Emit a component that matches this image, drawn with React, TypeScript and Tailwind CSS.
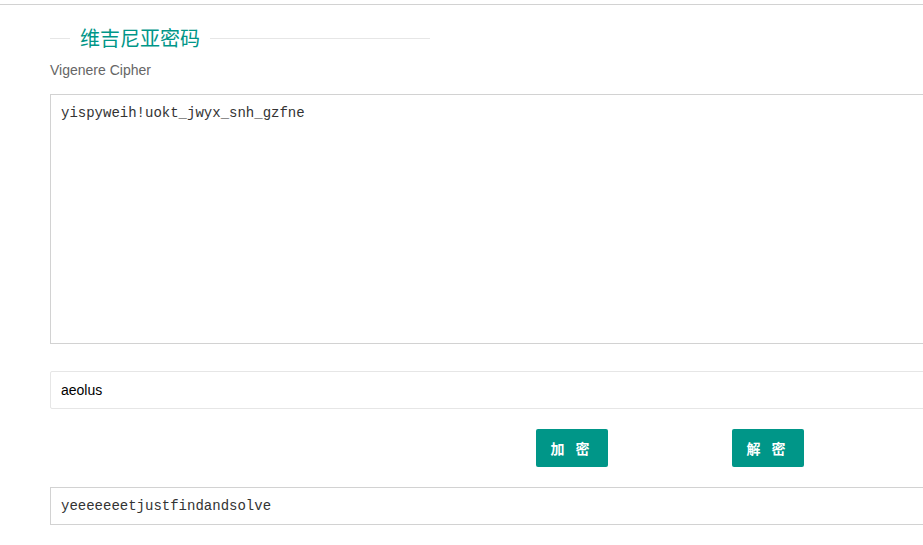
export default function App() {
  return (
    <div className="h-[545px] w-[923px] overflow-hidden bg-white font-['Liberation_Sans','Noto_Sans_CJK_SC',sans-serif]">
      <div className="h-[4px]" />
      <div className="border-t border-[#d2d2d2] pl-[50px]">
        <div className="mt-[18px] flex w-[380px] items-center">
          <div className="h-px w-[20px] bg-[#e6e6e6]" />
          <span className="px-[10px] font-['Noto_Sans_CJK_SC',sans-serif] text-[20px] leading-[30px] text-[#009688]">
            维吉尼亚密码
          </span>
          <div className="h-px flex-1 bg-[#e6e6e6]" />
        </div>
        <p className="mt-[7px] text-[14px] leading-[20px] text-[#666]">Vigenere Cipher</p>
        <textarea
          readOnly
          value="yispyweih!uokt_jwyx_snh_gzfne"
          className="mt-[14px] block h-[250px] w-[1000px] resize-none border border-[#d2d2d2] px-[10px] py-[8px] font-['Liberation_Mono',monospace] text-[14px] leading-[20px] text-[#333] outline-none"
        />
        <input
          readOnly
          value="aeolus"
          className="mt-[27px] block h-[38px] w-[1000px] rounded-[2px] border border-[#e6e6e6] px-[10px] text-[14px] text-black outline-none"
        />
        <div className="mt-[20px] flex gap-[124px] pl-[486px]">
          <button className="h-[38px] w-[72px] rounded-[2px] bg-[#009688] font-['Noto_Sans_CJK_SC',sans-serif] text-[14px] font-bold tracking-[4px] text-white">
            加 密
          </button>
          <button className="h-[38px] w-[72px] rounded-[2px] bg-[#009688] font-['Noto_Sans_CJK_SC',sans-serif] text-[14px] font-bold tracking-[4px] text-white">
            解 密
          </button>
        </div>
        <div className="mt-[20px] flex h-[38px] w-[1000px] items-center border border-[#d2d2d2] px-[10px] pt-[1px] font-['Liberation_Mono',monospace] text-[14px] text-[#333]">
          yeeeeeeetjustfindandsolve
        </div>
      </div>
    </div>
  );
}
